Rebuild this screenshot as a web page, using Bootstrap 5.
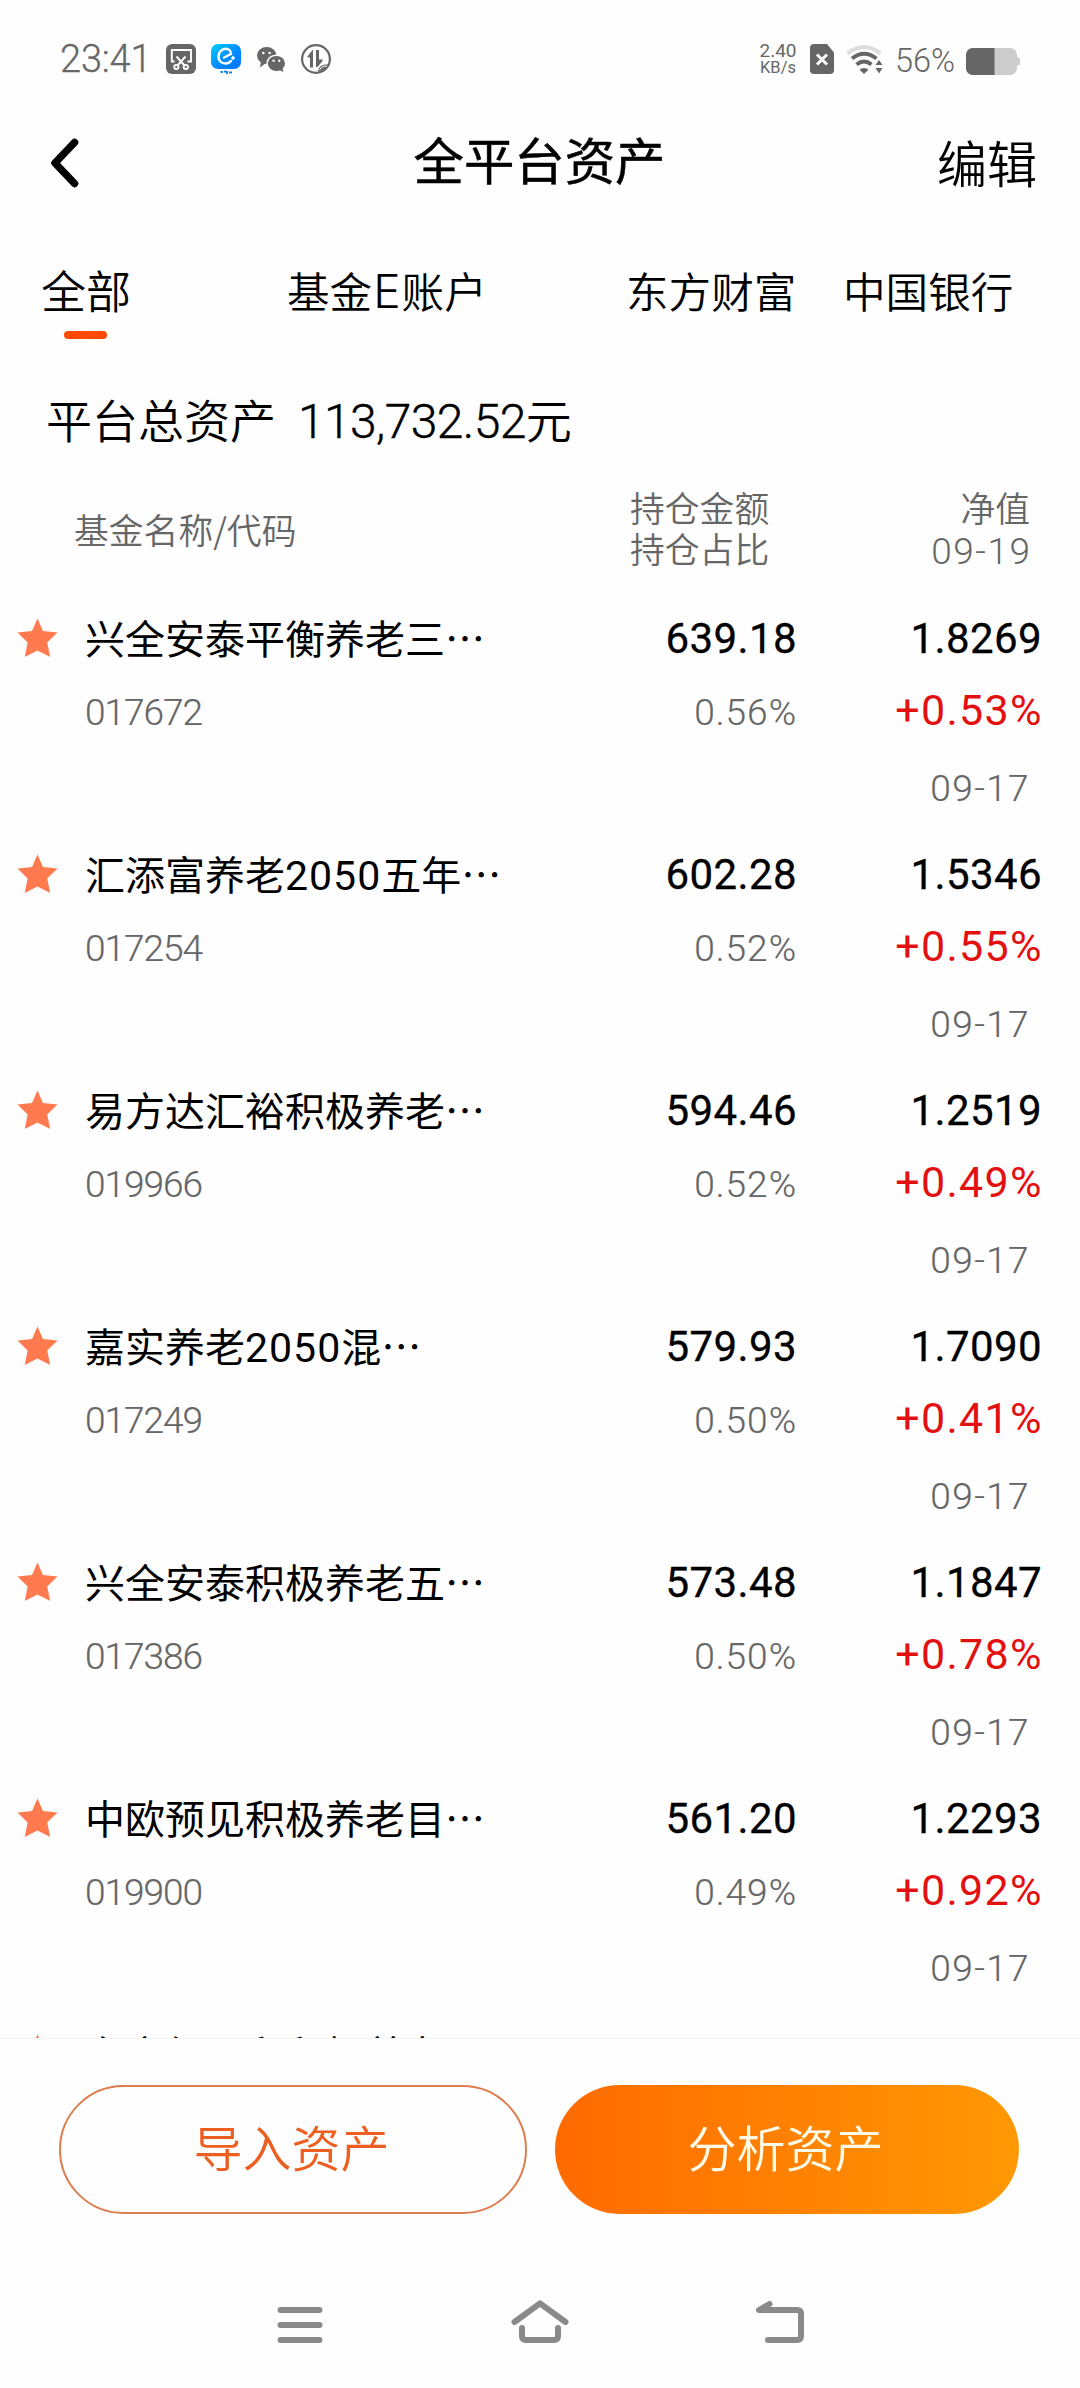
<!DOCTYPE html>
<html lang="zh-CN">
<head>
<meta charset="utf-8">
<meta name="viewport" content="width=device-width, initial-scale=1">
<title>全平台资产</title>
<link href="https://cdn.jsdelivr.net/npm/bootstrap@5.3.0/dist/css/bootstrap.min.css" rel="stylesheet">
<style>
  body { width: 1080px; height: 2388px; background: #fefefe; color: #000; overflow: hidden;
         font-family: "Noto Sans CJK SC", "Noto Sans", sans-serif; font-weight: 350; }
  svg { display: block; flex: none; }
  .status { height: 118px; padding: 0 60px; color: #666; font-family: Roboto, sans-serif; font-weight: 300; }
  .clock { font-size: 38px; line-height: 40px; width: 106px; letter-spacing: -.2px; -webkit-text-stroke: .3px #666; }
  .speed { font-size: 19px; line-height: 18px; width: 38px; font-weight: 400; margin-right: 1px; }
  .speed .unit { font-size: 16.5px; line-height: 16px; }
  .batt { font-size: 32.5px; line-height: 40px; width: 71px; }
  .titlebar { height: 90px; padding: 0 43px 0 50px; }
  .titlebar h1 { font-size: 50.4px; line-height: 60px; font-weight: 400; width: 252px; margin: 0 0 8px; -webkit-text-stroke: .5px #000; }
  .side { width: 272px; }
  .side-l { width: 264px; }
  .edit { font-size: 50px; line-height: 60px; padding-bottom: 4px; }
  .tabs { height: 152px; font-size: 42.6px; line-height: 60px; padding-top: 51.5px; }
  .tabs .on { font-size: 45px; margin-left: 41px; width: 246px; }
  .tabs .on::after { content: ""; display: block; width: 43px; height: 8px; border-radius: 4px; background: #ff4800; margin: 11.5px 0 0 23px; }
  .tabs .lat { font-family: Inter, sans-serif; font-weight: 300; font-size: 46px; letter-spacing: 1px; margin-left: 1px; line-height: 1; }
  .t-e { width: 339px; } .t-d { width: 217px; }
  .total { height: 127px; padding: 28px 0 0 46px; font-size: 46px; line-height: 60px; }
  .total .sum { margin-left: 22px; }
  .total .sum span { font-family: Roboto, sans-serif; font-weight: 300; font-size: 48px; line-height: 1; letter-spacing: -.6px; -webkit-text-stroke: .4px #000; }
  .heads { height: 107px; color: #666; font-size: 34.8px; line-height: 41px; }
  .heads .first { padding-top: 21.5px; }
  .c-name { padding-left: 74px; width: 630px; }
  .c-hold { width: 150px; }
  .c-nav { flex: 1; padding-right: 50px; }
  .c-nav .d { font: 300 37px/47px Roboto, sans-serif; letter-spacing: 1.5px; margin-right: -1.5px; }
  .fund-list { height: 1444px; overflow: hidden; }
  .fund { height: 236px; padding: 12px 38px 0 17px; }
  .fund svg { margin: 12px 27px 0 0; }
  .f-name { width: 472px; }
  .f-hold { width: 240px; }
  .f-nav { flex: 1; }
  .nm { font-size: 40px; line-height: 62px; font-weight: 400; white-space: nowrap; }
  .nm span { font-family: Roboto, sans-serif; font-size: 41px; line-height: 1; letter-spacing: 1px; }
  .num, .sub, .chg, .dt { font-family: Roboto, sans-serif; }
  .num { font-size: 42px; line-height: 66px; font-weight: 400; letter-spacing: .4px; -webkit-text-stroke: .3px #000; }
  .sub { font-size: 37px; line-height: 81px; color: #666; font-weight: 300; letter-spacing: 1px; -webkit-text-stroke: .2px #666; }
  .code { line-height: 89px; letter-spacing: -1px; }
  .chg { font-size: 43px; line-height: 76px; color: #e31010; font-weight: 400; letter-spacing: 1.3px; margin-right: -.8px; }
  .dt { font-size: 37px; line-height: 81px; color: #666; padding-right: 12px; font-weight: 300; letter-spacing: 1.4px; -webkit-text-stroke: .2px #666; }
  .actions { height: 232px; border-top: 1px solid #f3f3f3; padding: 46px 61px 0 59px; gap: 28px; }
  .actions .btn { height: 129px; font-size: 49px; line-height: 60px; flex: 1; padding: 0 3px 8px 0; font-weight: 350; }
  .b-in { border: 2px solid #de7d4f; color: #ec5f20; }
  .b-an { border: 0; color: #fffbe8; background: linear-gradient(90deg, #ff6a00, #ff9804); }
  .sysnav { height: 118px; }
</style>
<script src="https://cdn.jsdelivr.net/npm/bootstrap@5.3.0/dist/js/bootstrap.bundle.min.js"></script>
</head>
<body class="d-flex flex-column">
<svg width="0" height="0" class="position-absolute">
  <symbol id="star" viewBox="0 0 41 41"><path d="M20.500 0.500 26 13 40.500 14.500 30.200 24.500 33.200 39 20.500 32.500 7.800 39 10.600 24.500 0.500 14.500 15 13Z" fill="#ff7a4f"/></symbol>
</svg>

<header class="status d-flex align-items-center">
  <div class="clock">23:41</div>
  <svg width="30" height="30" viewBox="0 0 30 30"><rect width="30" height="30" rx="6" fill="#666"/><g fill="none" stroke="#fff" stroke-width="1.9"><path d="M8.5 17.5H5.800V6H25v11.500H21.500"/><path d="M10.500 12.500 18.500 21.500M19.500 12.500 11.500 21.500"/><circle cx="10.300" cy="23" r="2.100"/><circle cx="19.800" cy="23" r="2.100"/></g></svg>
  <svg style="margin-left:15px" width="30" height="30" viewBox="0 0 30 30"><defs><linearGradient id="eg" x1="0" y1="0" x2="1" y2="1"><stop offset="0" stop-color="#00d0ff"/><stop offset=".5" stop-color="#0090ff"/><stop offset="1" stop-color="#0070ff"/></linearGradient></defs><rect width="30" height="25" rx="7" fill="url(#eg)"/><path d="M13 13.500 20 10C20 6.500 17.500 4.800 14.800 4.800 10.500 4.800 7.500 8.500 7.500 12.500 7.500 17 10.500 19.500 14.500 19.500 17 19.500 18.800 18.500 20 17" fill="none" stroke="#fff" stroke-width="2.500" stroke-linecap="round"/><path d="M22 12v4M20 14h4" stroke="#fff" stroke-width="1.500"/><path d="M9.500 28h2.500M13 27.500h2M16 27v3M18 28.500h3" stroke="#1484dc" stroke-width="2"/></svg>
  <svg class="ms-3" width="28" height="30" viewBox="0 0 28 30"><g fill="#666"><ellipse cx="9.700" cy="11.500" rx="9.700" ry="8.500"/><path d="M4 17 3 23.500 9 19Z"/></g><ellipse cx="19.200" cy="19.200" rx="9.800" ry="8.700" fill="#fefefe"/><ellipse cx="19.400" cy="19.400" rx="8.600" ry="7.500" fill="#666"/><path d="M21 25.500 26.500 28 25 23Z" fill="#666"/><g fill="#fefefe"><circle cx="6.300" cy="9" r="1.300"/><circle cx="12.600" cy="9" r="1.300"/><circle cx="16.600" cy="16.800" r="1.200"/><circle cx="22.200" cy="16.800" r="1.200"/></g></svg>
  <svg class="ms-3" width="30" height="30" viewBox="0 0 30 30"><circle cx="15" cy="15" r="13.900" fill="none" stroke="#666" stroke-width="2.200"/><path d="M12 6v17.500H9V13.500H6.500V12.500L11.500 6ZM15 6h3v9.500h3.500v1.500L16.500 23H15Z" fill="#666"/><path d="M17 27.500C17.500 22 21 20 28 20.500L24 26.500Z" fill="#666"/><path d="M18.500 26C20 23 22.500 22 26 22" stroke="#fefefe" fill="none" stroke-width="1"/></svg>
  <div class="speed ms-auto text-center"><div>2.40</div><div class="unit">KB/s</div></div>
  <svg class="me-1" style="margin-left:12px" width="24" height="30" viewBox="0 0 24 30"><path d="M4 0H17L24 8.500V26a4 4 0 0 1-4 4H4a4 4 0 0 1-4-4V4a4 4 0 0 1 4-4Z" fill="#666"/><path d="m7 10.500 10 10M17 10.500 7 20.500" stroke="#fff" stroke-width="3"/></svg>
  <svg class="ms-2 me-2" width="37" height="30" viewBox="0 0 37 30"><g fill="none"><path d="M1.500 9.500Q18 -3.500 34.500 9.500" stroke="#ddd" stroke-width="4"/><path d="M6 14.500Q18 5 30.500 14.500" stroke="#666" stroke-width="3.800"/><path d="M10.500 20.500Q18 14.500 25.500 20.500" stroke="#666" stroke-width="3.800"/></g><path d="M13.500 25.500Q18 22.500 22.500 25.500L18 30ZM29.500 21 33 16 36.500 21ZM29.500 24 33 29.500 36.500 24Z" fill="#666"/></svg>
  <div class="batt ms-1 pt-1">56%</div>
  <svg class="mt-1" width="54" height="27" viewBox="0 0 54 27"><path d="M28 0H44a7 7 0 0 1 7 7V9.200a4.300 4.300 0 0 1 0 8.600V20a7 7 0 0 1-7 7H28Z" fill="#ccc"/><path d="M28.500 0H6.500A6.500 6.500 0 0 0 0 6.500v14A6.500 6.500 0 0 0 6.500 27h22Z" fill="#666"/></svg>
</header>

<nav class="titlebar d-flex align-items-center justify-content-between">
  <div class="side-l"><svg width="30" height="50" viewBox="0 0 30 50"><path d="M24.500 4.500 5 25 24.500 45.500" fill="none" stroke="#000" stroke-width="7.500" stroke-linecap="round" stroke-linejoin="round"/></svg></div>
  <h1 class="text-nowrap">全平台资产</h1>
  <div class="side edit text-end">编辑</div>
</nav>

<nav class="tabs d-flex text-nowrap">
  <div class="on">全部</div><div class="t-e">基金<span class="lat">E</span>账户</div><div class="t-d">东方财富</div><div>中国银行</div>
</nav>

<section class="total d-flex"><div>平台总资产</div><div class="sum"><span>113,732.52</span>元</div></section>

<section class="heads d-flex text-nowrap">
  <div class="c-name first">基金名称/代码</div>
  <div class="c-hold">持仓金额<br>持仓占比</div>
  <div class="c-nav text-end">净值<div class="d">09-19</div></div>
</section>

<main class="fund-list">
  <div class="fund d-flex"><svg width="41" height="41"><use href="#star"/></svg>
    <div class="f-name"><div class="nm">兴全安泰平衡养老三…</div><div class="sub code">017672</div></div>
    <div class="f-hold text-end"><div class="num">639.18</div><div class="sub">0.56%</div></div>
    <div class="f-nav text-end"><div class="num">1.8269</div><div class="chg">+0.53%</div><div class="dt">09-17</div></div></div>
  <div class="fund d-flex"><svg width="41" height="41"><use href="#star"/></svg>
    <div class="f-name"><div class="nm">汇添富养老<span>2050</span>五年…</div><div class="sub code">017254</div></div>
    <div class="f-hold text-end"><div class="num">602.28</div><div class="sub">0.52%</div></div>
    <div class="f-nav text-end"><div class="num">1.5346</div><div class="chg">+0.55%</div><div class="dt">09-17</div></div></div>
  <div class="fund d-flex"><svg width="41" height="41"><use href="#star"/></svg>
    <div class="f-name"><div class="nm">易方达汇裕积极养老…</div><div class="sub code">019966</div></div>
    <div class="f-hold text-end"><div class="num">594.46</div><div class="sub">0.52%</div></div>
    <div class="f-nav text-end"><div class="num">1.2519</div><div class="chg">+0.49%</div><div class="dt">09-17</div></div></div>
  <div class="fund d-flex"><svg width="41" height="41"><use href="#star"/></svg>
    <div class="f-name"><div class="nm">嘉实养老<span>2050</span>混…</div><div class="sub code">017249</div></div>
    <div class="f-hold text-end"><div class="num">579.93</div><div class="sub">0.50%</div></div>
    <div class="f-nav text-end"><div class="num">1.7090</div><div class="chg">+0.41%</div><div class="dt">09-17</div></div></div>
  <div class="fund d-flex"><svg width="41" height="41"><use href="#star"/></svg>
    <div class="f-name"><div class="nm">兴全安泰积极养老五…</div><div class="sub code">017386</div></div>
    <div class="f-hold text-end"><div class="num">573.48</div><div class="sub">0.50%</div></div>
    <div class="f-nav text-end"><div class="num">1.1847</div><div class="chg">+0.78%</div><div class="dt">09-17</div></div></div>
  <div class="fund d-flex"><svg width="41" height="41"><use href="#star"/></svg>
    <div class="f-name"><div class="nm">中欧预见积极养老目…</div><div class="sub code">019900</div></div>
    <div class="f-hold text-end"><div class="num">561.20</div><div class="sub">0.49%</div></div>
    <div class="f-nav text-end"><div class="num">1.2293</div><div class="chg">+0.92%</div><div class="dt">09-17</div></div></div>
  <div class="fund d-flex"><svg width="41" height="41"><use href="#star"/></svg>
    <div class="f-name"><div class="nm">东方红颐和积极养老…</div></div></div>
</main>

<section class="actions d-flex">
  <button class="btn b-in rounded-pill">导入资产</button>
  <button class="btn b-an rounded-pill">分析资产</button>
</section>

<footer class="sysnav">
  <svg width="1080" height="118" viewBox="0 2270 1080 118"><g fill="none" stroke="#8a8a8a" stroke-width="6" stroke-linecap="round" stroke-linejoin="round"><path d="M280.500 2310H319.500M280.500 2325H319.500M280.500 2340H319.500"/><path d="M514.500 2322 540 2303.300 565.500 2322M522 2328V2336Q522 2340 526 2340H554Q558 2340 558 2336V2328"/><path d="M769.500 2304 759 2310H797Q801 2310 801 2314V2336Q801 2340 797 2340H768"/></g></svg>
</footer>
</body>
</html>
